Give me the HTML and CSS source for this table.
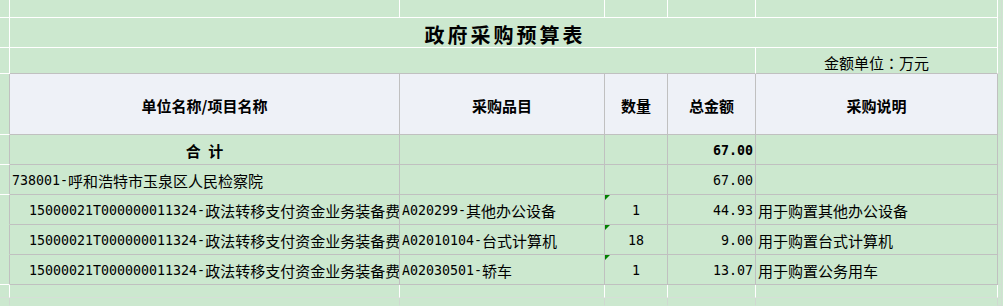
FILE: index.html
```html
<!DOCTYPE html>
<html lang="zh-CN">
<head>
<meta charset="utf-8">
<title>政府采购预算表</title>
<link rel="stylesheet" href="styles.css">
</head>
<body>
<div class="sheet">
  <!-- row 0 -->
  <div class="c"></div><div class="c"></div><div class="c"></div><div class="c"></div><div class="c"></div><div class="c"></div><div class="c g"></div><div class="h"></div>
  <!-- row 1: title -->
  <div class="c"></div>
  <div class="c title span5">政府采购预算表</div>
  <div class="c g"></div><div class="h"></div>
  <!-- row 2: unit -->
  <div class="c"></div>
  <div class="c span4 tb"></div>
  <div class="c tb unit">金额单位<span class="colon">：</span>万元</div>
  <div class="c g"></div><div class="h"></div>
  <!-- header -->
  <div class="c lt"></div>
  <div class="c t hd">单位名称/项目名称</div>
  <div class="c t hd">采购品目</div>
  <div class="c t hd">数量</div>
  <div class="c t hd">总金额</div>
  <div class="c t hd">采购说明</div>
  <div class="c g"></div><div class="h"></div>
  <!-- total -->
  <div class="c lt"></div>
  <div class="c t bold center">合&ensp;计</div>
  <div class="c t"></div>
  <div class="c t"></div>
  <div class="c t right"><span class="m b">67.00</span></div>
  <div class="c t"></div>
  <div class="c g"></div><div class="h"></div>
  <!-- unit row -->
  <div class="c lt"></div>
  <div class="c t pl"><span class="m">738001-</span>呼和浩特市玉泉区人民检察院</div>
  <div class="c t"></div>
  <div class="c t"></div>
  <div class="c t right"><span class="m">67.00</span></div>
  <div class="c t"></div>
  <div class="c g"></div><div class="h"></div>
  <!-- item 1 -->
  <div class="c lt nob"></div>
  <div class="c t indent"><span class="m">15000021T000000011324-</span>政法转移支付资金业务装备费</div>
  <div class="c t pl"><span class="m">A020299-</span>其他办公设备</div>
  <div class="c t center flag"><span class="m">1</span></div>
  <div class="c t right"><span class="m">44.93</span></div>
  <div class="c t pl">用于购置其他办公设备</div>
  <div class="c g"></div><div class="h"></div>
  <!-- item 2 -->
  <div class="c lt nob"></div>
  <div class="c t indent"><span class="m">15000021T000000011324-</span>政法转移支付资金业务装备费</div>
  <div class="c t pl"><span class="m">A02010104-</span>台式计算机</div>
  <div class="c t center flag"><span class="m">18</span></div>
  <div class="c t right"><span class="m">9.00</span></div>
  <div class="c t pl">用于购置台式计算机</div>
  <div class="c g"></div><div class="h"></div>
  <!-- item 3 -->
  <div class="c lt"></div>
  <div class="c t indent"><span class="m">15000021T000000011324-</span>政法转移支付资金业务装备费</div>
  <div class="c t pl"><span class="m">A02030501-</span>轿车</div>
  <div class="c t center flag"><span class="m">1</span></div>
  <div class="c t right"><span class="m">13.07</span></div>
  <div class="c t pl">用于购置公务用车</div>
  <div class="c g"></div><div class="h"></div>
  <!-- empty row -->
  <div class="c fb"></div><div class="c fb"></div><div class="c fb"></div><div class="c fb"></div><div class="c fb"></div><div class="c fb"></div><div class="c g"></div><div class="h"></div>
  <!-- last partial row -->
  <div class="c ff"></div><div class="c ff"></div><div class="c ff"></div><div class="c ff"></div><div class="c ff"></div><div class="c ff"></div><div class="c g"></div><div class="h"></div>
</div>
</body>
</html>
```

FILE: styles.css
```css
* { box-sizing: border-box; }
html, body {
  margin: 0;
  padding: 0;
  background: #cce8cf;
}
body {
  width: 1003px;
  height: 306px;
  overflow: hidden;
  font-family: "Noto Sans CJK SC", "Noto Sans", sans-serif;
  font-size: 15px;
  color: #000;
}
.sheet {
  display: grid;
  grid-template-columns: 10px 390px 205px 63px 88px 242px 4px 1fr;
  grid-template-rows: 18px 30px 26px 61px 30px 30px 30px 30px 30px 13px 8px;
  width: 1003px;
  height: 306px;
  background: #cce8cf;
}
.c {
  border-right: 1px solid #ffffff;
  border-bottom: 1px solid #ffffff;
  display: flex;
  align-items: center;
  white-space: nowrap;
  overflow: hidden;
  line-height: 1;
  min-width: 0;
}
.g {
  border-right-color: #d3ddd4;
  border-bottom-color: #d3ddd4;
}
.span5 { grid-column: span 5; }
.span4 { grid-column: span 4; }
.title {
  justify-content: center;
  font-size: 20px;
  font-weight: 700;
  letter-spacing: 3px;
  padding-left: 3px;
  padding-top: 4px;
}
.tb { border-bottom-color: #c0c0c0; }
.unit {
  justify-content: center;
  padding-top: 3px;
}
.colon {
  font-family: "Noto Sans CJK JP", "Noto Sans CJK SC", sans-serif;
}
.lt { border-right-color: #c0c0c0; }
.nob { border-bottom-color: #cce8cf; }
.t {
  border-right-color: #c0c0c0;
  border-bottom-color: #c0c0c0;
  padding-top: 2px;
}
.hd {
  background: #eef1f7;
  justify-content: center;
  font-weight: 700;
}
.bold { font-weight: 700; }
.center { justify-content: center; }
.right { justify-content: flex-end; padding-right: 2px; }
.pl { padding-left: 2px; }
.indent { padding-left: 19px; }
.m {
  font-family: "DejaVu Sans Mono", "Liberation Mono", monospace;
  font-size: 13.3px;
}
.b { font-weight: 700; }
.flag { position: relative; }
.flag::before {
  content: "";
  position: absolute;
  top: 0;
  left: 0;
  width: 0;
  height: 0;
  border-top: 5px solid #008000;
  border-right: 5px solid transparent;
}
.fb { border-bottom-color: #d6ded7; }
.ff {
  border-right-color: #d0d9d1;
  border-bottom-color: #cce8cf;
}
```
